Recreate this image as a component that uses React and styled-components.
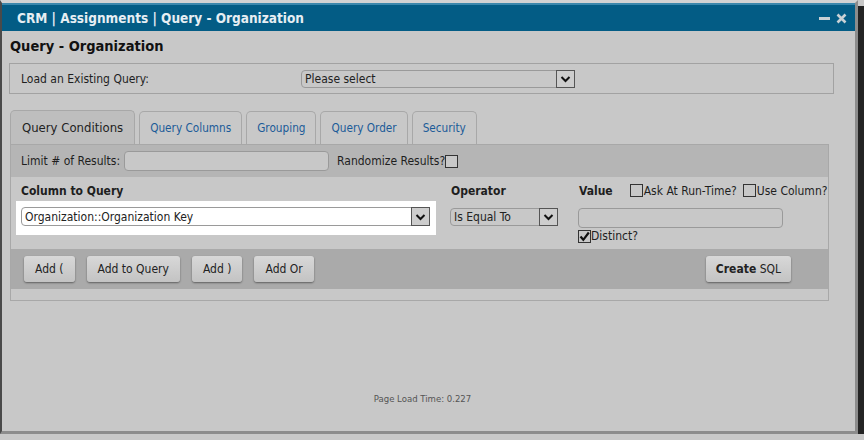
import styled, { createGlobalStyle } from "styled-components";

const Global = createGlobalStyle`
  html, body {
    margin: 0;
    padding: 0;
    background: #c8c8c8;
  }
  body {
    font-family: "DejaVu Sans Condensed", "DejaVu Sans", sans-serif;
    font-size: 12px;
    color: #1e1e1e;
  }
`;

const Window = styled.div`
  box-sizing: border-box;
  width: 858px;
  height: 434px;
  background: #c8c8c8;
  border-top: 3px solid #d2d2d2;
  border-left: 2px solid #4a4a4a;
  border-right: 3px solid #8c8c8c;
  border-bottom: 3px solid #8c8c8c;
  box-shadow: 6px 6px 0 #242424;
  display: flex;
  flex-direction: column;
`;

const TitleBar = styled.div`
  height: 28px;
  box-sizing: border-box;
  background: #035c85;
  border-top: 2px solid #3b87ac;
  display: flex;
  align-items: center;
  justify-content: space-between;
  padding: 0 8px 0 15px;
`;

const TitleText = styled.span`
  color: #e6eef3;
  font-weight: bold;
  font-size: 13.5px;
`;

const TitleIcons = styled.div`
  display: flex;
  gap: 6px;
  align-items: center;
`;

const Content = styled.div`
  flex: 1;
  display: flex;
  flex-direction: column;
  padding: 0 21px 0 7px;
`;

const Heading = styled.h1`
  margin: 0;
  height: 32px;
  line-height: 31px;
  font-size: 14.5px;
  font-weight: bold;
  color: #111;
  padding-left: 1px;
`;

const LoadBox = styled.div`
  display: flex;
  align-items: center;
  height: 31px;
  box-sizing: border-box;
  border: 1px solid #a2a2a2;
  padding-left: 11px;
`;

const LoadLabel = styled.span`
  width: 280px;
`;

const SelectBox = styled.div`
  box-sizing: border-box;
  width: ${(p) => p.$w}px;
  height: ${(p) => p.$h || 18}px;
  display: flex;
  align-items: center;
  justify-content: space-between;
  border: 1px solid #9a9a9a;
  border-radius: 4px 0 0 4px;
  background: ${(p) => (p.$white ? "#fff" : "#c8c8c8")};
  padding-left: 3px;
  color: #222;
`;

const Arrow = styled.span`
  box-sizing: border-box;
  width: 19px;
  height: calc(100% + 2px);
  margin-right: -1px;
  border: 1px solid #555;
  background: #cdcdcd;
  display: flex;
  align-items: center;
  justify-content: center;
`;

const Tabs = styled.div`
  display: flex;
  align-items: flex-end;
  gap: 4px;
  margin-top: 16px;
  padding-left: 1px;
`;

const Tab = styled.div`
  box-sizing: border-box;
  height: ${(p) => (p.$active ? 34 : 33)}px;
  padding: 0 ${(p) => (p.$active ? 11 : 10)}px;
  display: flex;
  align-items: center;
  border: 1px solid #a8a8a8;
  border-bottom: none;
  border-radius: 5px 5px 0 0;
  background: ${(p) => (p.$active ? "#bebebe" : "#c8c8c8")};
  color: ${(p) => (p.$active ? "#222" : "#1b5b98")};
  font-size: ${(p) => (p.$active ? 13 : 11.7)}px;
`;

const Panel = styled.div`
  margin-left: 1px;
  width: 819px;
  box-sizing: border-box;
  border: 1px solid #a8a8a8;
  display: flex;
  flex-direction: column;
`;

const LimitRow = styled.div`
  height: 32px;
  background: #b5b5b5;
  display: flex;
  align-items: center;
  padding-left: 10px;
`;

const TextInput = styled.div`
  box-sizing: border-box;
  width: 205px;
  height: ${(p) => p.$h || 20}px;
  border: 1px solid #9a9a9a;
  border-radius: 4px;
  background: #c8c8c8;
  margin: ${(p) => p.$m || "0"};
`;

const Check = styled.span`
  box-sizing: border-box;
  display: inline-flex;
  align-items: center;
  justify-content: center;
  width: 13px;
  height: 13px;
  border: 1px solid #333;
  background: #c8c8c8;
  margin: ${(p) => p.$m || "0"};
`;

const Conditions = styled.div`
  display: flex;
  height: 72px;
  padding-top: 4px;
  box-sizing: border-box;
`;

const Field = styled.div`
  display: flex;
  flex-direction: column;
  width: ${(p) => p.$w}px;
`;

const FieldHead = styled.div`
  height: 19px;
  display: flex;
  align-items: center;
  font-weight: bold;
  padding-left: ${(p) => p.$pl || 0}px;
`;

const HeadOption = styled.span`
  display: inline-flex;
  align-items: center;
  font-weight: normal;
`;

const WhiteWrap = styled.div`
  width: 420px;
  box-sizing: border-box;
  background: #fff;
  padding: 6px 6px 9px 5px;
  margin: 1px 0 0 5px;
`;

const SelectRow = styled.div`
  margin-top: 8px;
`;

const Distinct = styled.div`
  display: flex;
  align-items: center;
  margin-top: 1px;
`;

const ButtonBar = styled.div`
  height: 40px;
  background: #aaaaaa;
  display: flex;
  align-items: center;
  gap: 12px;
  padding: 0 37px 0 13px;
`;

const Button = styled.div`
  box-sizing: border-box;
  height: 26px;
  padding: 0 ${(p) => (p.$right ? 10 : 11)}px;
  display: flex;
  align-items: center;
  border-radius: 3px;
  background: linear-gradient(#d8d8d8, #c3c3c3);
  box-shadow: 0 1px 2px rgba(0, 0, 0, 0.45);
  color: #222;
  margin-left: ${(p) => (p.$right ? "auto" : "0")};
`;

const PanelFoot = styled.div`
  height: 11px;
`;

const Footer = styled.div`
  margin-top: auto;
  height: 38px;
  text-align: center;
  font-size: 9.5px;
  color: #555;
  padding-left: 2px;
`;

const Chevron = () => (
  <svg width="11" height="8" viewBox="0 0 11 8">
    <path d="M1.5 2 L5.5 6 L9.5 2" fill="none" stroke="#111" strokeWidth="2" />
  </svg>
);

const Tick = () => (
  <svg width="11" height="11" viewBox="0 0 11 11">
    <path d="M1.5 5.5 L4.3 8.8 L9.8 1.5" fill="none" stroke="#111" strokeWidth="2.2" />
  </svg>
);

export default function App() {
  return (
    <>
      <Global />
      <Window>
        <TitleBar>
          <TitleText>CRM | Assignments | Query - Organization</TitleText>
          <TitleIcons>
            <svg width="11" height="11" viewBox="0 0 11 11">
              <rect x="0" y="4" width="11" height="3" fill="#c9d1d5" />
            </svg>
            <svg width="11" height="11" viewBox="0 0 11 11">
              <path d="M1.5 1.5 L9.5 9.5 M9.5 1.5 L1.5 9.5" stroke="#c9d1d5" strokeWidth="2.6" />
            </svg>
          </TitleIcons>
        </TitleBar>
        <Content>
          <Heading>Query - Organization</Heading>
          <LoadBox>
            <LoadLabel>Load an Existing Query:</LoadLabel>
            <SelectBox $w={274} $h={18}>
              Please select
              <Arrow>
                <Chevron />
              </Arrow>
            </SelectBox>
          </LoadBox>
          <Tabs>
            <Tab $active>Query Conditions</Tab>
            <Tab>Query Columns</Tab>
            <Tab>Grouping</Tab>
            <Tab>Query Order</Tab>
            <Tab>Security</Tab>
          </Tabs>
          <Panel>
            <LimitRow>
              Limit # of Results:
              <TextInput $m="0 8px 0 4px" />
              Randomize Results?
              <Check />
            </LimitRow>
            <Conditions>
              <Field $w={439}>
                <FieldHead $pl={10}>Column to Query</FieldHead>
                <WhiteWrap>
                  <SelectBox $w={409} $h={19} $white>
                    Organization::Organization Key
                    <Arrow>
                      <Chevron />
                    </Arrow>
                  </SelectBox>
                </WhiteWrap>
              </Field>
              <Field $w={128}>
                <FieldHead $pl={1}>Operator</FieldHead>
                <SelectRow>
                  <SelectBox $w={108} $h={18}>
                    Is Equal To
                    <Arrow>
                      <Chevron />
                    </Arrow>
                  </SelectBox>
                </SelectRow>
              </Field>
              <Field $w={250}>
                <FieldHead $pl={1}>
                  Value
                  <HeadOption>
                    <Check $m="0 1px 0 17px" />
                    Ask At Run-Time?
                  </HeadOption>
                  <HeadOption>
                    <Check $m="0 1px 0 6px" />
                    Use Column?
                  </HeadOption>
                </FieldHead>
                <TextInput $h={20} $m="8px 0 0 0" />
                <Distinct>
                  <Check>
                    <Tick />
                  </Check>
                  Distinct?
                </Distinct>
              </Field>
            </Conditions>
            <ButtonBar>
              <Button>Add (</Button>
              <Button>Add to Query</Button>
              <Button>Add )</Button>
              <Button>Add Or</Button>
              <Button $right>
                <b>Create</b>&nbsp;SQL
              </Button>
            </ButtonBar>
            <PanelFoot />
          </Panel>
          <Footer>Page Load Time: 0.227</Footer>
        </Content>
      </Window>
    </>
  );
}
